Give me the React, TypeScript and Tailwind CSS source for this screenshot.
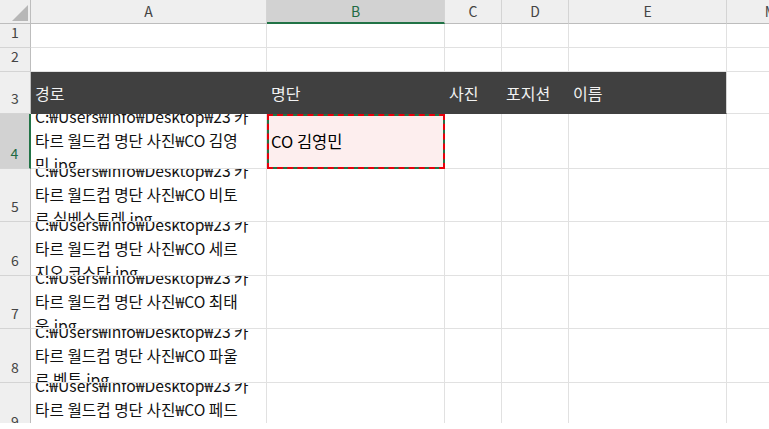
import React from "react";

const FONT = { fontFamily: '"Noto Sans CJK KR", "Noto Sans", sans-serif' };

// column widths incl. right gridline: row header, A, B, C, D, E, F
const COLS = ["w-[31px]", "w-[236px]", "w-[178px]", "w-[57px]", "w-[67px]", "w-[158px]", "w-[88px]"];
const LETTERS = ["A", "B", "C", "D", "E", "M"];

const PATH = "C:₩Users₩info₩Desktop₩23 카";
const rows = [
  { n: 4, h: "h-[55px]", mid: "타르 월드컵 명단 사진₩CO 김영", end: "민.jpg" },
  { n: 5, h: "h-[53px]", mid: "타르 월드컵 명단 사진₩CO 비토", end: "르 실베스트레.jpg" },
  { n: 6, h: "h-[54px]", mid: "타르 월드컵 명단 사진₩CO 세르", end: "지오 코스타.jpg" },
  { n: 7, h: "h-[53px]", mid: "타르 월드컵 명단 사진₩CO 최태", end: "욱.jpg" },
  { n: 8, h: "h-[54px]", mid: "타르 월드컵 명단 사진₩CO 파울", end: "로 벤투.jpg" },
  { n: 9, h: "h-[54px]", mid: "타르 월드컵 명단 사진₩CO 페드", end: "로 페레이라.jpg" },
];

function RowNum({ n, active }: { n: number; active?: boolean }) {
  return (
    <div
      className={`${COLS[0]} shrink-0 h-full flex items-end justify-center pb-[4px] border-b border-[#d4d4d4] border-r text-[14px] ${
        active
          ? "bg-[#d2d2d2] text-[#1f6b43] border-r-[#217346] border-r-2"
          : "bg-[#efefef] text-[#444] border-r-[#bdbdbd]"
      }`}
    >
      {n}
    </div>
  );
}

function Blank({ i }: { i: number }) {
  return <div className={`${COLS[i]} shrink-0 h-full border-r border-b border-[#e1e1e1] bg-white`} />;
}

export default function App() {
  return (
    <div className="w-[769px] h-[429px] overflow-hidden bg-white text-black" style={FONT}>
      <div className="h-[423px] overflow-hidden">
        {/* column letters */}
        <div className="flex h-[24px]">
          <div className={`${COLS[0]} shrink-0 h-full bg-[#efefef] border-r border-b border-[#bdbdbd]`}>
            <svg width="31" height="24" viewBox="0 0 31 24">
              <polygon points="28,5 28,21 12,21" fill="#b7b7b7" />
            </svg>
          </div>
          {LETTERS.map((l, i) => (
            <div
              key={l}
              className={`${COLS[i + 1]} shrink-0 h-full flex items-center justify-center border-r border-r-[#d4d4d4] text-[14px] ${
                l === "B"
                  ? "bg-[#d2d2d2] text-[#1f6b43] border-b-2 border-b-[#217346]"
                  : "bg-[#efefef] text-[#444] border-b border-b-[#bdbdbd]"
              }`}
            >
              {l}
            </div>
          ))}
        </div>

        {/* rows 1, 2 */}
        {[1, 2].map((n) => (
          <div key={n} className="flex h-[24px]">
            <RowNum n={n} />
            {[1, 2, 3, 4, 5, 6].map((i) => (
              <Blank key={i} i={i} />
            ))}
          </div>
        ))}

        {/* row 3 - header band */}
        <div className="flex h-[42px]">
          <RowNum n={3} />
          {["경로", "명단", "사진", "포지션", "이름"].map((t, i) => (
            <div
              key={t}
              className={`${COLS[i + 1]} shrink-0 h-full flex items-center pl-[4px] bg-[#404040] text-[#f2f2f2] text-[16px] whitespace-nowrap border-b border-b-[#404040] border-r ${
                i === 4 ? "border-r-[#d4d4d4]" : "border-r-[#404040]"
              }`}
            >
              {t}
            </div>
          ))}
          <Blank i={6} />
        </div>

        {/* data rows */}
        {rows.map((r) => (
          <div key={r.n} className={`flex ${r.h}`}>
            <RowNum n={r.n} active={r.n === 4} />
            <div
              className={`${COLS[1]} shrink-0 h-full overflow-hidden flex flex-col justify-center pl-[4px] border-r border-b border-[#e1e1e1] text-[15.7px] leading-[24px] whitespace-nowrap text-[#111]`}
            >
              <div>{PATH}</div>
              <div>{r.mid}</div>
              <div>{r.end}</div>
            </div>
            {r.n === 4 ? (
              <div className={`${COLS[2]} shrink-0 h-full border-2 border-dashed border-[#e8000b] bg-[#217346]`}>
                <div className="h-full flex items-center pl-[2px] bg-[#fdeeee] text-[16.5px]">CO 김영민</div>
              </div>
            ) : (
              <Blank i={2} />
            )}
            {[3, 4, 5, 6].map((i) => (
              <Blank key={i} i={i} />
            ))}
          </div>
        ))}
      </div>
    </div>
  );
}
